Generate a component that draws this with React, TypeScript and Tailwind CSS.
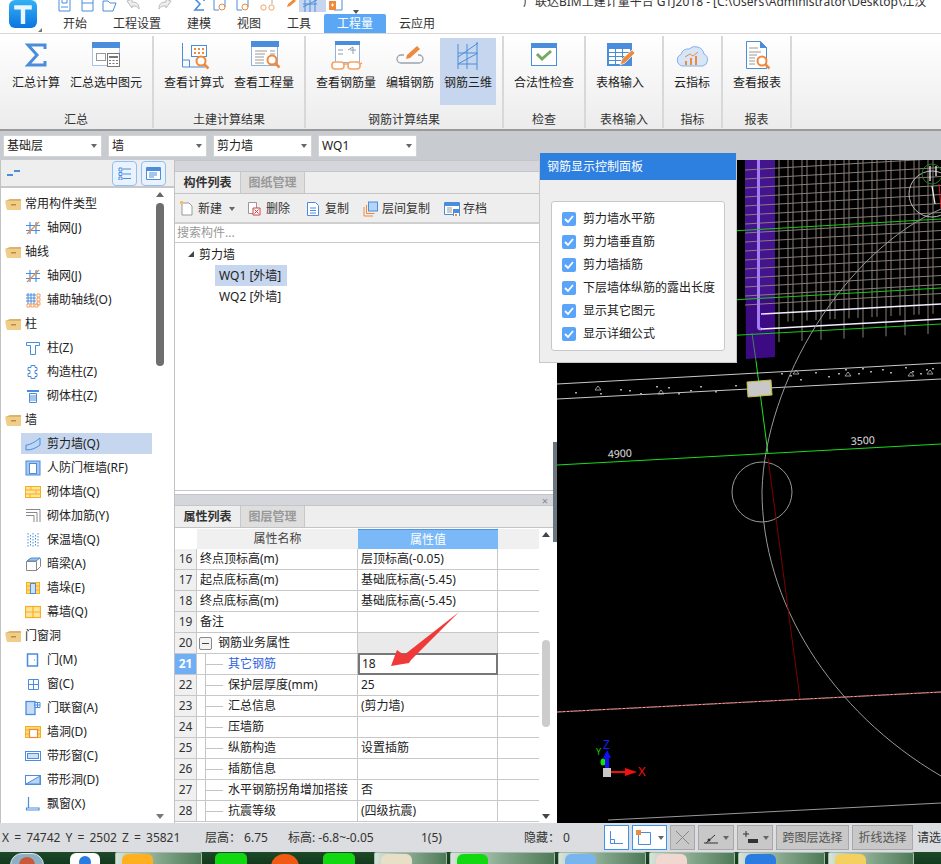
import type { ReactNode } from "react";

const B = "#4a8ddc";
const O = "#ef8a3c";
const Y = "#f5b021";

const Down = ({ color = "border-t-[#666]" }: { color?: string }) => (
  <span className={`inline-block w-0 h-0 border-x-[3.5px] border-x-transparent border-t-[4px] ${color}`} />
);

const Mag = ({ x, y }: { x: number; y: number }) => (
  <g fill="none" stroke={O}>
    <circle cx={x} cy={y} r="4.5" strokeWidth="2" fill="#fff" />
    <path d={`M${x + 3} ${y + 3}l4.5 4.5`} strokeWidth="2.5" />
  </g>
);

const RibbonIcons: Record<string, ReactNode> = {
  sum: <path d="M27 9V5H10l9 10-9 10h17v-4" fill="none" stroke={B} strokeWidth="3" />,
  sel: (
    <>
      <rect x="4.5" y="2.5" width="27" height="23" fill="#fff" stroke="#a9c3e4" />
      <rect x="4" y="2" width="28" height="6" fill={B} />
      <rect x="8.5" y="13.5" width="9" height="7" fill="none" stroke="#999" />
      <rect x="19.5" y="13.5" width="12" height="13" fill="#fff" stroke="#777" />
      <path d="M21 16h9v2h-9zM21 20h2v1h-2zM24.500 20h2v1h-2zM28 20h2v1h-2zM21 23h2v1h-2zM24.500 23h2v1h-2zM28 23h2v1h-2z" fill="#777" />
    </>
  ),
  calc: (
    <>
      <path d="M6.500 3v24h23M6.500 20h7v7" fill="none" stroke={B} />
      <rect x="15.500" y="5.500" width="15" height="11" fill="#fff" stroke={B} />
      <path d="M18 8h2v2h-2zM22 8h2v2h-2zM26 8h2v2h-2zM18 12h2v2h-2zM22 12h2v2h-2zM26 12h2v2h-2z" fill={O} />
      <Mag x={25} y={21} />
    </>
  ),
  qty: (
    <>
      <rect x="5.500" y="2.500" width="26" height="23" fill="#fff" stroke="#8fb2de" />
      <rect x="5" y="1" width="28" height="6" fill={B} />
      <path d="M9 11h12M9 14h10M9 17h9M9 20h9M9 23h9M24 11h5M24 14h5" stroke="#999" />
      <Mag x={26} y={20} />
    </>
  ),
  glass: (
    <>
      <rect x="7.500" y="2.500" width="24" height="20" fill="#fff" stroke="#8fb2de" />
      <rect x="7" y="1" width="25" height="4" fill={B} />
      <path d="M10 10h5M10 14h5M22 10h6M25 7v7M20 10l5-3" stroke="#8a9bb0" fill="none" />
      <g fill="#fff" stroke="#f3a568" strokeWidth="1.600">
        <path d="M5 22l-1 4" fill="none" />
        <rect x="4" y="22" width="12" height="7" rx="3" />
        <rect x="20" y="22" width="12" height="7" rx="3" />
        <path d="M16 24h4M32 24l2-1" fill="none" />
      </g>
    </>
  ),
  edit: (
    <>
      <path d="M12 15H9a4 4 0 0 0 0 8h18a4 4 0 0 0 0-8h-1" fill="none" stroke="#9aa3ad" strokeWidth="1.300" />
      <path d="M14 19l1-4L25 6l3 3-10 9z" fill={O} />
    </>
  ),
  rebar: (
    <g stroke={B} fill="none">
      <path d="M8 17l20-14M8 24l20-11M8 4v25M17 4v25M27 2v28M8 24h19M8 13h19" />
    </g>
  ),
  check: (
    <>
      <rect x="5.500" y="3.500" width="25" height="22" fill="#fff" stroke={B} />
      <rect x="5" y="3" width="26" height="5" fill={B} />
      <path d="M11 14l5 5 9-8" fill="none" stroke="#76a960" strokeWidth="3" />
    </>
  ),
  table: (
    <>
      <rect x="5" y="3" width="25" height="23" fill={B} />
      <path d="M7 9h6v3H7zM14 9h6v3h-6zM21 9h7v3h-7zM7 13h6v3H7zM14 13h6v3h-6zM21 13h7v3h-7zM7 17h6v3H7zM14 17h6v3h-6zM7 21h6v3H7zM14 21h6v3h-6z" fill="#fff" />
      <path d="M18 25l2-6 10-9 3 3-10 10z" fill={O} stroke="#fff" strokeWidth=".7" />
    </>
  ),
  cloud: (
    <>
      <path d="M9 26a6 6 0 0 1-2-11.500A7 7 0 0 1 15 9a9 9 0 0 1 15 5 6.500 6.500 0 0 1-1 12z" fill="#d6e6f8" stroke="#84b1e6" />
      <path d="M11 21h2v4h-2zM16 18h2v7h-2zM21 16h2v9h-2z" fill={O} />
      <path d="M11 17l5-3 3 2 5-4" fill="none" stroke={O} />
    </>
  ),
  report: (
    <>
      <path d="M7.500 1.500h14l6 6v21h-20z" fill="#fff" stroke={B} />
      <path d="M21 1l7 7h-7z" fill={B} />
      <path d="M10 8h9M10 12h12M10 15h8M10 18h6M10 21h6M10 24h6" stroke="#999" />
      <Mag x={23} y={21} />
    </>
  ),
};

const RibbonButton = ({ label, icon, active }: { label: string; icon: string; active?: boolean }) => (
  <div className={`flex flex-col items-center px-1 pt-[2px] h-[67px] ${active ? "bg-[#c6d6ee]" : ""}`}>
    <svg width="36" height="32" viewBox="0 0 36 32">{RibbonIcons[icon]}</svg>
    <span className="mt-[3px] leading-4 whitespace-nowrap">{label}</span>
  </div>
);

const groups = [
  { name: "汇总", w: "w-[154px]", pl: "pl-2", items: [["汇总计算", "sum"], ["汇总选中图元", "sel"]] },
  { name: "土建计算结果", w: "w-[152px]", pl: "pl-1.5", items: [["查看计算式", "calc"], ["查看工程量", "qty"]] },
  { name: "钢筋计算结果", w: "w-[198px]", pl: "pl-1.5", items: [["查看钢筋量", "glass"], ["编辑钢筋", "edit"], ["钢筋三维", "rebar"]] },
  { name: "检查", w: "w-[82px]", pl: "pl-1.5", items: [["合法性检查", "check"]] },
  { name: "表格输入", w: "w-[78px]", pl: "pl-1.5", items: [["表格输入", "table"]] },
  { name: "指标", w: "w-[59px]", pl: "pl-1.5", items: [["云指标", "cloud"]] },
  { name: "报表", w: "w-[69px]", pl: "pl-1.5", items: [["查看报表", "report"]] },
];

const quick = [
  ["w-[23px]", <path key="a" d="M2 1h11v12H2zM5 1v4h5V1M4 9h7" fill="none" stroke={B} />],
  ["w-[22px]", <path key="a" d="M2 1h11v12H2zM2 5h11" fill="none" stroke={B} />],
  ["w-[23px]", <path key="a" d="M1 3h5l2 2h6L11 13H1z" fill="none" stroke={B} />],
  ["w-[32px]", <path key="a" d="M2 3l5-2v3c5 0 7 2 7 7-2-3-4-3-7-3v2z" fill="#eee" stroke="#bbb" />],
  ["w-[35px]", <path key="a" d="M14 3L9 1v3C4 4 2 6 2 11c2-3 4-3 7-3v2z" fill="#eee" stroke="#bbb" />],
  ["w-[20px]", <path key="a" d="M12 3V1H3l5 5-5 6h9" fill="none" stroke={B} strokeWidth="1.600" />],
  ["w-[23px]", <g key="a"><path d="M2 1h11v8M2 1v11h5" fill="none" stroke={B} /><circle cx="10" cy="9" r="3" fill="none" stroke={O} /></g>],
  ["w-[25px]", <g key="a"><path d="M2 1h11v8M2 1v11h5" fill="none" stroke={B} /><circle cx="10" cy="9" r="3" fill="none" stroke={O} /></g>],
  ["w-[23px]", <g key="a" fill="none" stroke="#f3a568"><rect x="1" y="7" width="5" height="5" rx="2" /><rect x="9" y="7" width="5" height="5" rx="2" /><path d="M3 1h9v5" stroke="#aaa" /></g>],
  ["w-[18px]", <path key="a" d="M4 9l1-3 6-5 2 2-6 5z" fill={O} />],
  ["w-[27px] bg-[#c6d6ee]", <path key="a" d="M4 1v13M9 1v13M14 1v13M2 9l14-7M2 6h14" fill="none" stroke={B} />],
  ["w-[24px]", <g key="a"><path d="M3 1h11v11H6" fill="none" stroke={B} /><path d="M1 3h7v9H1z" fill={O} /><path d="M3 7h3M4.500 5.500v3" stroke="#fff" /></g>],
];

const treeIcons: Record<string, ReactNode> = {
  grid: <path d="M5 2v12M11 2v12M1 5.500h14M1 10.500h14" fill="none" stroke={B} strokeWidth="1.200" />,
  aux: (
    <>
      <path d="M3 1v11M6 1v11M9 1v11M1 3h10M1 6h10M1 9h10" fill="none" stroke={B} />
      <path d="M12 2h3v3h-3zM12 6h3v3h-3zM12 10h3v3h-3zM2 12h3v3H2zM6 12h3v3H6zM10 12h3v3h-3z" fill="none" stroke={O} strokeWidth=".8" />
    </>
  ),
  tcol: <path d="M1.500 2.500h13v3h-4v9h-5v-9h-4z" fill="#fff" stroke={B} />,
  gzz: <path d="M6 1.500h4v2h2v3h-2v3h2v3h-2v2H6v-2H3v-3h2v-3H3v-3h3z" fill="#fff" stroke={B} strokeLinejoin="round" />,
  qtz: (
    <>
      <path d="M2 2h12v2H2z" fill={B} />
      <path d="M4.500 5.500h7v9h-7z" fill="#fff" stroke={B} />
      <path d="M5 8h6M5 10h6M5 12h6" stroke={B} />
    </>
  ),
  shear: <path d="M1 9C5 9 10 6 15 2v7c-4 3-8 5-14 5z" fill="#bcd6f5" stroke={B} />,
  rf: (
    <>
      <rect x="1" y="1" width="14" height="14" fill="#a9c7ee" stroke={B} />
      <rect x="4.500" y="3.500" width="7" height="10" fill="#fff" stroke={B} />
    </>
  ),
  brick: (
    <>
      <rect x=".5" y="2.500" width="15" height="11" fill="#ffe49a" stroke={Y} />
      <path d="M1 6h14M1 10h14M6 3v3M11 6v4M5 10v3" stroke={Y} fill="none" />
    </>
  ),
  bar: <path d="M1 1.500h14V14M1 4.500h11V14M1 7.500h8V14" fill="none" stroke="#888" />,
  insul: <path d="M3 1v14M13 1v14M8 1v14M5.500 3v11M10.500 3v11" fill="none" stroke={B} strokeDasharray="1.500 1.500" />,
  beam: (
    <>
      <path d="M1.500 5.500l4-3h10v8l-4 4h-10z" fill="#fff" stroke="#888" />
      <path d="M2 5l4-3h9l-4 3z" fill="#9cc0ec" stroke={B} />
      <path d="M11.500 5.500v9M1.500 5.500h10" stroke="#888" />
    </>
  ),
  pier: (
    <>
      <rect x="1.500" y="2.500" width="13" height="11" fill="#ffd97a" stroke={Y} />
      <path d="M2 6h12M2 10h12" stroke={Y} />
      <rect x="5.500" y="3.500" width="5" height="10" fill="#cfe1f7" stroke={B} />
    </>
  ),
  curtain: (
    <>
      <rect x=".5" y="2.500" width="15" height="11" fill="#ffe49a" stroke={Y} strokeWidth="1.200" />
      <path d="M8 3v10M1 8h14" stroke={Y} strokeWidth="1.200" />
    </>
  ),
  door: (
    <>
      <rect x="2.500" y="2" width="10" height="12" fill="#fff" stroke={B} strokeWidth="1.500" />
      <path d="M9 8h1" stroke={B} />
    </>
  ),
  win: <path d="M3.500 3.500h10v10h-10zM8.500 3.500v10M3.500 8.500h10" fill="#fff" stroke={B} />,
  doorwin: (
    <>
      <rect x="1" y="1.500" width="9" height="13" fill="#c8dcf5" stroke={B} strokeWidth="1.300" />
      <path d="M10 2.500h5v5h-5zM12.500 2.500v5M10 5h5" fill="#fff" stroke={B} />
    </>
  ),
  hole: (
    <>
      <rect x=".5" y="2.500" width="15" height="11" fill="#ffd97a" stroke={Y} />
      <path d="M1 6h14M1 10h14" stroke={Y} />
      <rect x="4.500" y="5.500" width="8" height="8" fill="#fff" stroke={O} strokeWidth="1.200" />
    </>
  ),
  swin: (
    <>
      <rect x=".5" y="3.500" width="15" height="9" fill="#fff" stroke={B} />
      <rect x="2.500" y="5.500" width="11" height="5" fill="#cfe1f7" stroke={B} />
    </>
  ),
  shole: (
    <>
      <rect x=".5" y="3.500" width="15" height="9" fill="#fff" stroke={B} />
      <path d="M1 12l14-8v8z" fill="#b9d3f3" stroke={B} />
    </>
  ),
  bay: <path d="M3.500 1v11M3.500 12H14v2H1.500v-2zM1.500 14" fill="none" stroke={B} strokeWidth="1.200" />,
};

const tree: [string, string?][] = [
  ["常用构件类型"],
  ["轴网(J)", "grid"],
  ["轴线"],
  ["轴网(J)", "grid"],
  ["辅助轴线(O)", "aux"],
  ["柱"],
  ["柱(Z)", "tcol"],
  ["构造柱(Z)", "gzz"],
  ["砌体柱(Z)", "qtz"],
  ["墙"],
  ["剪力墙(Q)", "shear"],
  ["人防门框墙(RF)", "rf"],
  ["砌体墙(Q)", "brick"],
  ["砌体加筋(Y)", "bar"],
  ["保温墙(Q)", "insul"],
  ["暗梁(A)", "beam"],
  ["墙垛(E)", "pier"],
  ["幕墙(Q)", "curtain"],
  ["门窗洞"],
  ["门(M)", "door"],
  ["窗(C)", "win"],
  ["门联窗(A)", "doorwin"],
  ["墙洞(D)", "hole"],
  ["带形窗(C)", "swin"],
  ["带形洞(D)", "shole"],
  ["飘窗(X)", "bay"],
];

const Folder = () => (
  <svg width="16" height="12" viewBox="0 0 16 12">
    <path d="M0 3l5-2h11v2z" fill="#d9b46c" />
    <path d="M0 3h16v9H2z" fill="#f0ce8a" />
    <path d="M6 6h5v1.500H6z" fill="#b98f42" />
  </svg>
);

const TreeRow = ({ label, icon }: { label: string; icon?: string }) => {
  if (!icon) {
    return (
      <div className="h-6 flex items-center pl-1">
        <Folder />
        <span className="ml-[4px] leading-4">{label}</span>
      </div>
    );
  }
  const isSel = label === "剪力墙(Q)";
  return (
    <div className="h-6 flex items-center pl-[24px] relative">
      {isSel && <div className="absolute left-[20px] right-0 top-[1px] h-[21px] bg-[#c6d6ee]" />}
      <svg width="16" height="16" viewBox="0 0 16 16" className="relative">
        {treeIcons[icon]}
        {icon === "grid" && <path d="M2 14L14 2" stroke={O} strokeWidth="1.200" />}
      </svg>
      <span className="relative ml-[6px] leading-4 whitespace-nowrap">{label}</span>
    </div>
  );
};

const LeftPanel = () => (
  <div className="w-[174px] shrink-0 flex flex-col bg-white border-l border-[#c0c2c6]">
    <div className="h-[28px] shrink-0 flex items-center bg-[#eeeeee] border-b-2 border-[#c6c8cc] relative pl-[6px]">
      <svg width="14" height="8" viewBox="0 0 14 8">
        <path d="M0 5h6v2H0zM7 1h6v2H7z" fill={B} />
      </svg>
      <div className="ml-auto flex gap-1 mr-2">
        <div className="w-[25px] h-[25px] rounded-[4px] border border-[#8ec0f5] bg-[#eaf3fd] flex items-center justify-center">
          <svg width="13" height="13" viewBox="0 0 13 13">
            <path d="M1 1h3v3H1zM1 5.500h3v3H1zM1 10h3v3H1z" fill="none" stroke={B} />
            <path d="M5 2h8M5 7h8M5 11.500h8" stroke={B} />
          </svg>
        </div>
        <div className="w-[25px] h-[25px] rounded-[4px] border border-[#8ec0f5] bg-[#eaf3fd] flex items-center justify-center">
          <svg width="15" height="13" viewBox="0 0 15 13">
            <path d="M.5.500h14v12H.5z" fill="#fff" stroke={B} />
            <path d="M1 1h13v3H1z" fill={B} />
            <path d="M3 6h8M3 8h8M3 10h5" stroke={B} />
          </svg>
        </div>
      </div>
    </div>
    <div className="flex-1 flex min-h-0 overflow-hidden">
      <div className="w-[151px] shrink-0 pt-1">
        {tree.map((r, i) => (
          <TreeRow key={i} label={r[0]} icon={r[1]} />
        ))}
      </div>
      <div className="flex-1 flex flex-col items-center pr-[6px] pt-1 pb-[4px]">
        <span className="inline-block w-0 h-0 border-x-4 border-x-transparent border-b-[5px] border-b-[#666]" />
        <div className="w-2 h-[163px] mt-[6px] rounded bg-[#6e6e6e]" />
        <div className="flex-1" />
        <span className="inline-block w-0 h-0 border-x-4 border-x-transparent border-t-[5px] border-t-[#777]" />
      </div>
    </div>
  </div>
);

const PanelTabs = ({ a, b, close }: { a: string; b: string; close?: boolean }) => (
  <>
    <div className="h-[12px] shrink-0 bg-[#d5d6db] border-y border-[#c4c6ca] flex items-center justify-end pr-[5px] text-[#888]">
      {close && <span className="text-[11px] leading-none">×</span>}
    </div>
    <div className="h-[22px] shrink-0 flex bg-[#eeeeee] border-b border-[#c4c4c4]">
      <div className="w-[65px] flex items-center justify-center font-bold text-[#333]">{a}</div>
      <div className="w-[65px] flex items-center justify-center font-bold text-[#999] bg-[#dedede] border-x border-[#c8c8c8]">{b}</div>
    </div>
  </>
);

const Tool = ({ w, label, children, arrow }: { w: string; label: string; children: ReactNode; arrow?: boolean }) => (
  <div className={`${w} shrink-0 flex items-center`}>
    <svg width="19" height="16" viewBox="0 0 19 16" className="shrink-0">{children}</svg>
    <span className="leading-4 text-[#333]">{label}</span>
    {arrow && <span className="ml-[7px] flex"><Down /></span>}
  </div>
);

const ListPanel = () => (
  <div className="h-[331px] shrink-0 flex flex-col bg-white border-b border-[#c4c6ca]">
    <PanelTabs a="构件列表" b="图纸管理" />
    <div className="h-[30px] shrink-0 flex items-center bg-[#eeeeee] pl-1 pt-px border-b-2 border-[#cfcfcf]">
      <Tool w="w-[68px]" label="新建" arrow>
        <path d="M3 2h7l3 3v9H3z" fill="#fff" stroke="#999" />
        <path d="M1 0h3v3H1z" fill="#f4c060" />
      </Tool>
      <Tool w="w-[59px]" label="删除">
        <path d="M1.500 1.500h8v11h-8z" fill="#fff" stroke="#999" />
        <path d="M6 7h7v7H6z" fill="#fff" stroke="#d04040" />
        <path d="M7.500 8.500l4 4M11.500 8.500l-4 4" stroke="#d04040" />
      </Tool>
      <Tool w="w-[57px]" label="复制">
        <path d="M1.500 1.500h8l3 3v10h-11z" fill="#fff" stroke={B} />
        <path d="M4 7h6M4 9.500h6M4 12h6" stroke={B} />
      </Tool>
      <Tool w="w-[81px]" label="层间复制">
        <path d="M1 6v9h9M3.500 4v8.500h8" fill="none" stroke={O} />
        <rect x="5.500" y="1" width="9" height="9" fill="#b6d4f7" stroke={B} />
      </Tool>
      <Tool w="w-[60px]" label="存档">
        <path d="M.5 1.500h15v12H.5z" fill="#fff" stroke={B} />
        <path d="M1 2h14v3H1zM9 8h7v7H9z" fill={B} />
        <path d="M3 7h5M3 9h5M3 11h5" stroke="#999" />
        <path d="M10 12h5v3h-5z" fill="#fff" />
        <path d="M11 13h2v2h-2z" fill={O} />
      </Tool>
    </div>
    <div className="h-[19px] shrink-0 pl-[2px] flex items-center border-b border-[#c8c8c8] text-[#999] leading-4">搜索构件...</div>
    <div className="relative flex-1">
      <div className="h-[22px] flex items-center pl-[13px] pt-[1px]">
        <svg width="7" height="7" viewBox="0 0 7 7"><path d="M0 6h6V0z" fill="#444" /></svg>
        <span className="ml-[4px] leading-4">剪力墙</span>
      </div>
      <div className="ml-[40px] w-[72px] h-[21px] bg-[#c6d6ee] flex items-center pl-1 leading-4 whitespace-nowrap">WQ1 [外墙]</div>
      <div className="ml-[40px] w-[72px] h-[21px] flex items-center pl-1 leading-4 whitespace-nowrap">WQ2 [外墙]</div>
    </div>
  </div>
);

const rows: [number, string, string, string?][] = [
  [16, "终点顶标高(m)", "层顶标高(-0.05)"],
  [17, "起点底标高(m)", "基础底标高(-5.45)"],
  [18, "终点底标高(m)", "基础底标高(-5.45)"],
  [19, "备注", ""],
  [20, "钢筋业务属性", "", "head"],
  [21, "其它钢筋", "18", "sel"],
  [22, "保护层厚度(mm)", "25", "sub"],
  [23, "汇总信息", "(剪力墙)", "sub"],
  [24, "压墙筋", "", "sub"],
  [25, "纵筋构造", "设置插筋", "sub"],
  [26, "插筋信息", "", "sub"],
  [27, "水平钢筋拐角增加搭接", "否", "sub"],
  [28, "抗震等级", "(四级抗震)", "sub"],
];

const PropRow = ({ row }: { row: [number, string, string, string?] }) => {
  const [no, name, val, kind] = row;
  const sel = kind === "sel";
  const nested = sel || kind === "sub";
  return (
    <div className="h-[21px] flex border-b border-[#c8c8c8] leading-4">
      <div className={`w-[22px] shrink-0 flex items-center justify-center border-r border-[#c8c8c8] ${sel ? "bg-[#70aef5] text-white font-bold" : "bg-[#f0f0f0] text-[#333]"}`}>{no}</div>
      <div className={`w-[161px] shrink-0 flex items-center border-r border-[#c8c8c8] ${sel ? "text-[#2e62e0]" : ""}`}>
        {kind === "head" && (
          <>
            <span className="ml-[2px] w-[13px] h-[13px] flex items-center justify-center border border-[#888] rounded-[2px] bg-[#f4f4f4]">
              <span className="w-[7px] h-px bg-[#444]" />
            </span>
            <span className="ml-[6px]">{name}</span>
          </>
        )}
        {nested && (
          <>
            <span className="ml-[8px] self-stretch w-px bg-[#c4c4c4]" />
            <span className="w-[17px] h-px bg-[#c4c4c4]" />
            <span className="ml-[5px] whitespace-nowrap">{name}</span>
          </>
        )}
        {!kind && <span className="ml-[3px]">{name}</span>}
      </div>
      {sel ? (
        <div className="w-[140px] -mt-px -mb-px h-[22px] shrink-0 flex items-center border-2 border-[#777] pl-[2px] bg-white">{val}</div>
      ) : (
        <div className={`w-[140px] shrink-0 flex items-center border-r border-[#c8c8c8] pl-[3px] ${kind === "head" ? "bg-[#eaeaea]" : ""}`}>{val}</div>
      )}
    </div>
  );
};

const PropPanel = () => (
  <div className="flex-1 min-h-0 flex flex-col bg-white relative">
    <PanelTabs a="属性列表" b="图层管理" close />
    <div className="flex flex-1 min-h-0 pt-px">
      <div className="w-[364px] shrink-0">
        <div className="h-[20px] flex leading-4">
          <div className="w-[22px] shrink-0" />
          <div className="w-[161px] shrink-0 bg-[#f0f0f0] flex items-center justify-center text-[#444]">属性名称</div>
          <div className="w-[140px] shrink-0 bg-[#7ab8f8] flex items-center justify-center text-white border-t border-[#4c96ea]">属性值</div>
          <div className="flex-1 bg-[#f0f0f0]" />
        </div>
        {rows.map((r) => (
          <PropRow key={r[0]} row={r} />
        ))}
      </div>
      <div className="flex-1 flex flex-col items-center pt-[3px] pb-[4px]">
        <span className="inline-block w-0 h-0 border-x-4 border-x-transparent border-b-[5px] border-b-[#444]" />
        <div className="flex-1" />
        <div className="w-2 h-[87px] rounded bg-[#cccccc] mb-[87px]" />
        <span className="inline-block w-0 h-0 border-x-4 border-x-transparent border-t-[5px] border-t-[#444]" />
      </div>
    </div>
  </div>
);

const specks = [
  [620, 388], [640, 392], [668, 386], [690, 389], [700, 385], [715, 390], [735, 384], [790, 374], [800, 378], [815, 371], [828, 375],
  [845, 368], [858, 372], [870, 370], [890, 371], [905, 366], [920, 372], [932, 367], [600, 392], [575, 391], [629, 389], [656, 385],
  [678, 392], [781, 372], [838, 372], [862, 367], [882, 368], [912, 370], [926, 368],
];
const tris = [[595, 385], [658, 389], [793, 369], [845, 371], [908, 371], [927, 369]];

const Canvas = () => {
  const hy = Array.from({ length: 16 }, (_, i) => 168 + i * 9);
  const vx = Array.from({ length: 24 }, (_, i) => 779 + i * 7 + (i % 2) * 2);
  return (
    <div className="flex-1 bg-black overflow-hidden">
      <svg width="384" height="663" viewBox="557 159 384 663" className="block">
        <path d="M745 159h30v197l-29 2z" fill="#3c0a82" />
        <path d="M745 159h30v139l-30 1z" fill="#44148e" />
        {hy.map((y) => (
          <path key={y} d={`M745 ${y + 1}L941 ${y - 10.5}`} stroke="#8a7f78" strokeWidth="1" />
        ))}
        {vx.map((x, i) => (
          <path key={x} d={`M${x} 159V${i % 3 === 0 ? 342 - (x - 762) * 0.054 : 322 - (x - 762) * 0.054}`} stroke="#8a7f78" strokeWidth="1" />
        ))}
        <path d="M758.500 159V326q0 2 3 2" fill="none" stroke="#a47cf2" strokeWidth="3" />
        <path d="M761 313L941 303M761 328L941 318" stroke="#f4eeff" strokeWidth="1.500" />
        <path d="M557 240L941 218M557 309L941 287M557 344L941 323" stroke="#17c917" />
        <path d="M752 332L756 360" stroke="#4a7a6a" />
        <path d="M756 360L768 453" stroke="#20e020" />
        <path d="M557 383L941 362M557 398L941 378" stroke="#c8c8c8" />
        {specks.map(([x, y]) => (
          <rect key={x} x={x} y={y} width="2" height="1.500" fill="#aaa" />
        ))}
        {tris.map(([x, y]) => (
          <path key={x} d={`M${x} ${y + 4}l3-4 3 4z`} fill="none" stroke="#bbb" strokeWidth=".8" />
        ))}
        <path d="M747 381L771 379 772 394 748 396z" fill="#c8c8c8" stroke="#c8c030" />
        <path d="M557 464L941 443" stroke="#18dd18" />
        <g fill="#e0e0e0" fontSize="10.500">
          <text x="608" y="457" transform="rotate(-3 608 457)">4900</text>
          <text x="851" y="444" transform="rotate(-3 851 444)">3500</text>
        </g>
        <circle cx="762" cy="491" r="30" fill="none" stroke="#999" />
        <path d="M941 208C845 250 765 380 762 490C762 600 830 710 941 775" fill="none" stroke="#999" />
        <path d="M768 457L800 698" stroke="#7e0000" />
        <path d="M557 711L941 691" stroke="#c8c8c8" />
        <path d="M557 711L941 691" stroke="#e02020" strokeDasharray="2 2" />
        <path d="M608 819L941 802" stroke="#999" />
        <circle cx="932" cy="193" r="23" fill="none" stroke="#bbb" />
        <circle cx="932" cy="173" r="10" fill="none" stroke="#1a7a1a" />
        <path d="M930 165v15M936 165v10M932 185l3 18" stroke="#eee" strokeWidth="1.300" />
        <path d="M939 183l2 24" stroke="#d02020" />
        <text x="603" y="748" fill="#1020ff" fontSize="12">Z</text>
        <text x="596" y="754" fill="#10d010" fontSize="9">Y</text>
        <ellipse cx="603" cy="761" rx="2.500" ry="3.500" fill="#10e010" />
        <path d="M607 749l4 8h-2v11h-4v-11h-2z" fill="#1010f0" />
        <rect x="603" y="767" width="8" height="9" fill="#c8c8c8" />
        <path d="M611 770h14v-3l12 4-12 4v-3h-14z" fill="#f01010" />
        <text x="638" y="775" fill="#f01010" fontSize="13">X</text>
      </svg>
    </div>
  );
};

const SBtn = ({ w, on, children }: { w: string; on?: boolean; children: ReactNode }) => (
  <div className={`${w} h-[25px] shrink-0 flex items-center justify-center border ${on ? "border-[#3a94f0] bg-white" : "border-[#a8a8a8] bg-[#c8c8c8]"}`}>
    {children}
  </div>
);

const StatusBar = () => (
  <div className="h-[29px] shrink-0 flex items-center bg-[#dcdde0] pl-[2px] text-[#333] leading-4 whitespace-nowrap overflow-hidden">
    <span className="w-[203px] shrink-0 [word-spacing:2px]">X = 74742 Y = 2502 Z = 35821</span>
    <span className="w-[83px] shrink-0">层高： 6.75</span>
    <span className="w-[133px] shrink-0">标高: -6.8~-0.05</span>
    <span className="w-[103px] shrink-0">1(5)</span>
    <span className="w-[80px] shrink-0">隐藏： 0</span>
    <div className="flex gap-[3px] items-center shrink-0">
      <SBtn w="w-[25px]" on>
        <svg width="15" height="15" viewBox="0 0 15 15"><path d="M1.500 1v12.500H14M1.500 9.500h4v4" fill="none" stroke={B} /></svg>
      </SBtn>
      <SBtn w="w-[35px]" on>
        <svg width="17" height="17" viewBox="0 0 17 17"><path d="M3.500 3.500h12v12h-12z" fill="none" stroke={B} /><rect x="1" y="1" width="5" height="5" fill={O} /></svg>
        <span className="ml-[6px] flex"><Down /></span>
      </SBtn>
      <SBtn w="w-[25px]">
        <svg width="15" height="15" viewBox="0 0 15 15"><path d="M1 1l13 13M14 1L1 14" stroke="#888" /></svg>
      </SBtn>
      <SBtn w="w-[36px]">
        <svg width="16" height="12" viewBox="0 0 16 12"><path d="M1 11h14M3 11l9-8" stroke="#333" /><circle cx="6" cy="8" r="1.500" fill="#333" /></svg>
        <span className="ml-[4px] flex"><Down /></span>
      </SBtn>
      <SBtn w="w-[36px]">
        <svg width="17" height="14" viewBox="0 0 17 14"><path d="M1 3h6M4 0v6" stroke="#333" /><rect x="6" y="8" width="10" height="4" fill="#333" /></svg>
        <span className="ml-[4px] flex"><Down /></span>
      </SBtn>
      <SBtn w="w-[73px]"><span className="text-[#555]">跨图层选择</span></SBtn>
      <SBtn w="w-[61px]"><span className="text-[#555]">折线选择</span></SBtn>
      <span className="ml-[1px]">请选择构件图元</span>
    </div>
  </div>
);

const TaskBtn = ({ w, swatch }: { w: string; swatch?: string }) => (
  <div className={`${w} shrink-0 h-full rounded-t-[2px] border-x border-t border-[#a8b8ac] bg-gradient-to-r from-[#d8e4da] via-[#86a88e] to-[#4e7a58] pl-[6px] overflow-hidden`}>
    {swatch && <div className={`w-[31px] h-[13px] mt-[1px] rounded-t-[6px] ${swatch}`} />}
  </div>
);

const Taskbar = () => (
  <div className="h-[13px] shrink-0 flex items-stretch gap-[3px] bg-gradient-to-b from-[#1d4a28] to-[#12381c] overflow-hidden">
    <div className="w-[112px] shrink-0 pl-[10px] flex gap-[26px] pt-[1px]">
      <div className="w-[34px] h-[24px] rounded-full bg-[#8fb0c4] border border-[#dfeaf0] shrink-0 flex justify-center pt-[3px]">
        <div className="w-[16px] h-[16px] rounded-full bg-[#c85a3a]" />
      </div>
      <div className="w-[30px] h-[20px] rounded-t-[6px] bg-white shrink-0 flex justify-center pt-[3px]">
        <div className="w-[12px] h-[12px] rounded-full bg-[#2a7ce0]" />
      </div>
    </div>
    <TaskBtn w="w-[87px]" swatch="bg-[#ffb020]" />
    <div className="w-[166px] shrink-0 pl-[10px] flex gap-[24px]">
      <div className="w-[32px] h-[13px] rounded-t-[5px] bg-[#12d812] mt-[1px]" />
      <div className="w-[28px] h-[13px] rounded-t-full bg-[#f05a14] mt-[2px]" />
      <div className="w-[32px] h-[13px] rounded-t-[5px] bg-[#12d812] mt-[1px]" />
    </div>
    <TaskBtn w="w-[73px]" swatch="bg-[#e8dfc8]" />
    <TaskBtn w="w-[105px]" swatch="bg-[#12d812]" />
    <TaskBtn w="w-[88px]" swatch="bg-[#78b4ee]" />
    <TaskBtn w="w-[86px]" swatch="bg-[#f0d8d0]" />
    <TaskBtn w="w-[87px]" swatch="bg-[#2a7ce0]" />
    <TaskBtn w="w-[86px]" swatch="bg-[#f4d060]" />
  </div>
);

const ControlPopup = () => (
  <div className="absolute left-[539px] top-[153px] w-[198px] h-[210px] bg-[#eeeeee] border border-t-0 border-[#c8c8c8] flex flex-col">
    <div className="h-[27px] shrink-0 bg-[#2d7fe0] text-white flex items-center pl-[7px] leading-4">钢筋显示控制面板</div>
    <div className="mx-[11px] mt-[21px] h-[150px] bg-white border border-[#c8c8cc] rounded-[3px] pt-[5px] pl-[10px]">
      {["剪力墙水平筋", "剪力墙垂直筋", "剪力墙插筋", "下层墙体纵筋的露出长度", "显示其它图元", "显示详细公式"].map((t) => (
        <div key={t} className="h-[23px] flex items-center whitespace-nowrap">
          <span className="w-[14px] h-[14px] rounded-[2px] bg-[#5aa5fa] flex items-center justify-center shrink-0">
            <svg width="10" height="8" viewBox="0 0 10 8"><path d="M1 4l3 3 5-6" fill="none" stroke="#fff" strokeWidth="1.800" /></svg>
          </span>
          <span className="ml-[7px] leading-4">{t}</span>
        </div>
      ))}
    </div>
  </div>
);

export default function App() {
  return (
    <div className="relative w-[941px] h-[864px] overflow-hidden flex flex-col bg-white text-xs text-[#222] [font-family:'Noto_Sans','Noto_Sans_CJK_SC',sans-serif]">
      <div className="h-[33px] shrink-0 flex">
        <div className="w-[46px] shrink-0 pl-[9px] relative">
          <div className="w-[28px] h-[28px] rounded-[6px] bg-gradient-to-b from-[#35b0f5] to-[#0a74e0] flex items-center justify-center">
            <svg width="22" height="22" viewBox="0 0 20 20"><path d="M2 2h16v4h-6v13H8V6H2z" fill="#e8f6ff" /></svg>
          </div>
          <span className="absolute left-[38px] top-[28px] w-0 h-0 border-l-[4px] border-l-transparent border-b-[4px] border-b-[#777]" />
        </div>
        <div className="flex-1 min-w-0 overflow-hidden">
          <div className="h-[14px] flex overflow-hidden">
            <div className="w-[477px] shrink-0 flex pl-[9px] items-start">
              {quick.map((q, i) => (
                <div key={i} className={`${q[0] as string} h-[12px] shrink-0 overflow-hidden pl-[2px]`}>
                  <svg width="16" height="14" viewBox="0 0 16 14" className="-mt-[2px]">{q[1]}</svg>
                </div>
              ))}
              <div className="ml-[3px] w-[7px] h-[5px] mt-[2px]"><Down color="border-t-[#555]" /></div>
            </div>
            <div className="-mt-[6px] leading-4 whitespace-nowrap text-[#333]">广联达BIM土建计量平台 GTJ2018 - [C:\Users\Administrator\Desktop\江汉</div>
          </div>
          <div className="h-[19px] flex leading-[19px] text-[#333]">
            <div className="ml-[17px] w-[50px]">开始</div>
            <div className="w-[74px]">工程设置</div>
            <div className="w-[50px]">建模</div>
            <div className="w-[50px]">视图</div>
            <div className="w-[37px]">工具</div>
            <div className="w-[62px] h-[19px] rounded-t-[2px] bg-[#5aa7f5] text-white text-center">工程量</div>
            <div className="ml-[13px]">云应用</div>
          </div>
        </div>
      </div>

      <div className="h-[98px] shrink-0 flex pt-[2px] bg-gradient-to-b from-white to-[#ececec] border-t border-[#d8d8d8] border-b-2 border-b-[#9a9a9a] text-[#222]">
        {groups.map((g) => (
          <div key={g.name} className={`${g.w} shrink-0 border-r-2 border-[#d8d8d8] flex flex-col h-[92px]`}>
            <div className={`flex gap-[2px] pt-[2px] ${g.pl}`}>
              {g.items.map(([l, ic]) => (
                <RibbonButton key={l} label={l} icon={ic} active={ic === "rebar"} />
              ))}
            </div>
            <div className="mt-[7px] text-center leading-4 text-[#333]">{g.name}</div>
          </div>
        ))}
      </div>

      <div className="h-[29px] shrink-0 flex items-center gap-[6px] pl-[3px] bg-[#c8cbd0]">
        {["基础层", "墙", "剪力墙", "WQ1"].map((c) => (
          <div key={c} className="w-[99px] h-[22px] bg-white border border-[#d4d4d4] flex items-center justify-between pl-[3px] pr-[4px] leading-4">
            {c}
            <Down />
          </div>
        ))}
      </div>

      <div className="h-[663px] shrink-0 flex">
        <LeftPanel />
        <div className="w-[379px] shrink-0 flex flex-col border-l border-[#c0c2c6] bg-white">
          <ListPanel />
          <div className="h-[3px] shrink-0 bg-white" />
          <PropPanel />
        </div>
        <div className="w-[4px] shrink-0 flex items-center bg-white">
          <div className="w-full h-[100px] bg-[#6b7680]" />
        </div>
        <Canvas />
      </div>

      <StatusBar />
      <Taskbar />

      <ControlPopup />
      <svg className="absolute left-[385px] top-[606px]" width="80" height="66" viewBox="385 606 80 66">
        <path d="M391 666L397 650 404 655 459 612 411 660 409 663z" fill="#f03a3a" />
      </svg>
    </div>
  );
}
